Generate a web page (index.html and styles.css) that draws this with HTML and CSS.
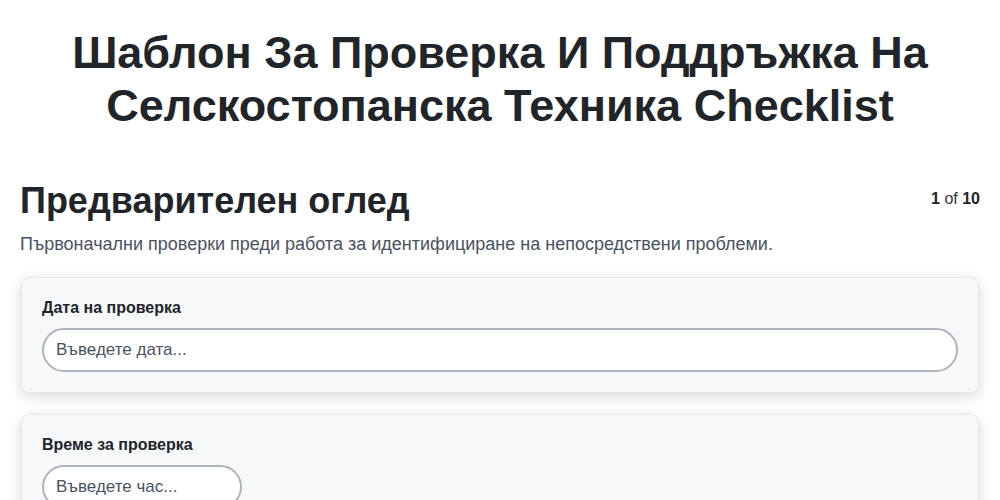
FILE: index.html
```html
<!DOCTYPE html>
<html lang="bg">
<head>
    <meta charset="UTF-8">
    <meta name="viewport" content="width=device-width, initial-scale=1.0">
    <title>Шаблон За Проверка И Поддръжка На Селскостопанска Техника Checklist</title>
    <link rel="stylesheet" href="styles.css">
</head>
<body>
    <div class="container">
        <h1>Шаблон За Проверка И Поддръжка На Селскостопанска Техника Checklist</h1>

        <div class="section-header">
            <h2>Предварителен оглед</h2>
            <div class="step-count"><b>1</b> of <b>10</b></div>
        </div>
        <p class="section-desc">Първоначални проверки преди работа за идентифициране на непосредствени проблеми.</p>

        <div class="field-card">
            <label for="date">Дата на проверка</label>
            <input type="text" id="date" placeholder="Въведете дата...">
        </div>

        <div class="field-card">
            <label for="time">Време за проверка</label>
            <input type="text" id="time" class="short" placeholder="Въведете час...">
        </div>
    </div>
</body>
</html>
```

FILE: styles.css
```css
body {
    font-family: 'Liberation Sans', Arial, sans-serif;
    margin: 0;
    padding: 0 20px;
    background-color: #fff;
    color: #212529;
}

.container {
    max-width: 960px;
    margin: 0 auto;
}

h1 {
    font-size: 45px;
    line-height: 53px;
    text-align: center;
    margin: 26px 0 47px;
    color: #212529;
}

.section-header {
    display: flex;
    justify-content: space-between;
    align-items: flex-start;
}

h2 {
    font-size: 36px;
    line-height: 43px;
    margin: 0;
}

.step-count {
    font-size: 16px;
    margin-top: 11px;
    color: #333;
}

.step-count b {
    color: #212529;
}

.section-desc {
    font-size: 18px;
    line-height: 24px;
    color: #4a5260;
    margin: 10px 0 21px;
}

.field-card {
    background: #f7f8fa;
    border: 1px solid #e6e8ec;
    border-radius: 8px;
    padding: 20px;
    margin: 0 1px 21px;
    box-shadow: 0 4px 14px rgba(0, 0, 0, 0.15);
}

label {
    display: block;
    font-size: 16px;
    line-height: 18px;
    font-weight: bold;
    margin: 1px 0 11px;
}

input[type="text"] {
    display: block;
    box-sizing: border-box;
    width: 100%;
    height: 44px;
    padding: 10px 12px;
    border: 2px solid #adb4bc;
    border-radius: 22px;
    background: #fff;
    font-family: inherit;
    font-size: 17px;
    color: #212529;
}

input::placeholder {
    color: #4a5260;
}

input.short {
    width: 200px;
}
```
